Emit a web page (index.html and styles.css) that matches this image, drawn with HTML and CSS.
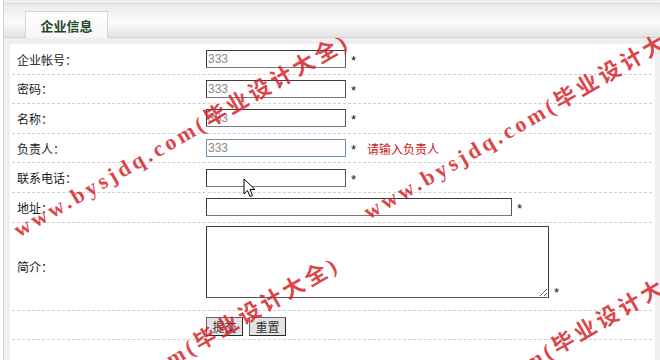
FILE: index.html
```html
<!DOCTYPE html>
<html lang="zh">
<head>
<meta charset="utf-8">
<title>企业信息</title>
<link rel="stylesheet" href="styles.css">
</head>
<body>
<div class="frame">
  <div class="topbar"><div class="tab">企业信息</div></div>
  <div class="panel">
    <div class="row"><div class="label">企业帐号：</div><div class="field"><input class="txt" value="333"><span class="req">*</span></div></div>
    <div class="row"><div class="label">密码：</div><div class="field"><input class="txt" value="333"><span class="req">*</span></div></div>
    <div class="row"><div class="label">名称：</div><div class="field"><input class="txt" value="333"><span class="req">*</span></div></div>
    <div class="row"><div class="label">负责人：</div><div class="field"><input class="txt focus" value="333"><span class="req">*</span><span class="err">请输入负责人</span></div></div>
    <div class="row"><div class="label">联系电话：</div><div class="field"><input class="txt" value=""><span class="req">*</span></div></div>
    <div class="row"><div class="label">地址：</div><div class="field"><input class="txt wide" value=""><span class="req">*</span></div></div>
    <div class="row tall"><div class="label">简介：</div><div class="field top"><textarea class="area"></textarea><span class="req">*</span></div></div>
    <div class="row"><div class="label"></div><div class="field"><button class="btn">提交</button><button class="btn">重置</button></div></div>
    <div class="row last"></div>
  </div>
</div>
<div class="wm">
  <span class="mark m1">www.bysjdq.com(毕业设计大全)</span>
  <span class="mark m2">www.bysjdq.com(毕业设计大全)</span>
  <span class="mark m3">www.bysjdq.com(毕业设计大全)</span>
  <span class="mark m4">www.bysjdq.com(毕业设计大全)</span>
</div>
<svg class="cursor" width="13" height="20" viewBox="0 0 13 20"><path d="M1 1 L1 16 L4.5 12.5 L7 18.5 L9.5 17.5 L7 11.5 L12 11.5 Z" fill="#fff" stroke="#000" stroke-width="1"/></svg>
</body>
</html>
```
FILE: styles.css
```css
html, body { margin: 0; padding: 0; }
body { background: #fff; font-family: "Noto Sans CJK SC", "Liberation Sans", sans-serif; font-size: 12px; color: #222; overflow: hidden; width: 660px; height: 360px; position: relative; }
.frame { margin-left: 3px; border-left: 1px solid #cfcfcf; background: #efefef; height: 360px; overflow: hidden; }
.topbar { margin-top: 3px; border-top: 1px solid #dcdcdc; border-bottom: 1px solid #d3d3d3; height: 33px; background: linear-gradient(#e9e9e9 0%, #f3f3f3 30%, #fbfbfb 55%, #ececec 85%, #e2e2e2 100%); padding-left: 21px; display: flex; align-items: flex-end; }
.tab { width: 81px; height: 26px; border: 1px solid #d6d6d6; border-bottom: none; background: linear-gradient(#ffffff, #f6f6f6); color: #23472a; font-weight: bold; font-size: 13px; display: flex; align-items: center; justify-content: center; margin-bottom: -1px; }
.panel { margin: 6px 5px 0 6px; background: #fff; padding: 1px 3px 0 2px; height: 320px; }
.row { display: flex; align-items: center; height: 28.6px; border-bottom: 1px dashed #cfcfcf; }
.row.tall { height: 87px; }
.row.last { border-bottom: none; }
.label { width: 189px; padding-left: 5px; flex: none; color: #1a1a1a; }
.field { display: flex; align-items: center; }
.field.top { align-self: flex-start; padding-top: 3px; align-items: flex-end; }
.txt { box-sizing: border-box; width: 140px; height: 18px; border: 1px solid #3c3c3c; border-bottom-color: #777; border-right-color: #555; padding: 0 0 0 1px; margin: 0; font-family: "Liberation Sans", sans-serif; font-size: 12px; color: #8a8a8a; background: #fff; outline: none; }
.txt.focus { border-color: #6f8fb0; }
.txt.wide { width: 306px; }
.req { margin-left: 5px; font-family: "Liberation Sans", sans-serif; font-size: 13px; color: #111; line-height: 1; padding-top: 3px; }
.err { margin-left: 11px; color: #cc1a1a; font-size: 12px; }
.area { box-sizing: border-box; width: 343px; height: 72px; border: 1px solid #3c3c3c; border-bottom-color: #555; margin: 0; padding: 0; resize: both; background: #fff; }
.field.top .req { margin-bottom: -1px; }
.btn { box-sizing: border-box; width: 37px; height: 19px; margin: 3px 6px 0 0; padding: 0; border: 1px solid #2a2a2a; border-top-color: #666; border-left-color: #666; background: #e4e4e4; font-family: "Noto Sans CJK SC", sans-serif; font-size: 12px; color: #333; line-height: 15px; }
.wm { position: absolute; left: 0; top: 0; width: 660px; height: 360px; pointer-events: none; overflow: hidden; }
.mark { position: absolute; white-space: nowrap; font-family: "Liberation Serif", "Noto Sans CJK SC", serif; font-weight: bold; font-size: 22px; letter-spacing: 3.5px; color: rgba(214, 36, 42, 0.85); transform-origin: 0 100%; transform: rotate(-30deg); line-height: 26px; }
.m1 { left: 22px; top: 217px; }
.m2 { left: 372px; top: 199px; }
.m3 { left: 12px; top: 440px; }
.m4 { left: 370px; top: 444px; }
.cursor { position: absolute; left: 243px; top: 178px; }
```
